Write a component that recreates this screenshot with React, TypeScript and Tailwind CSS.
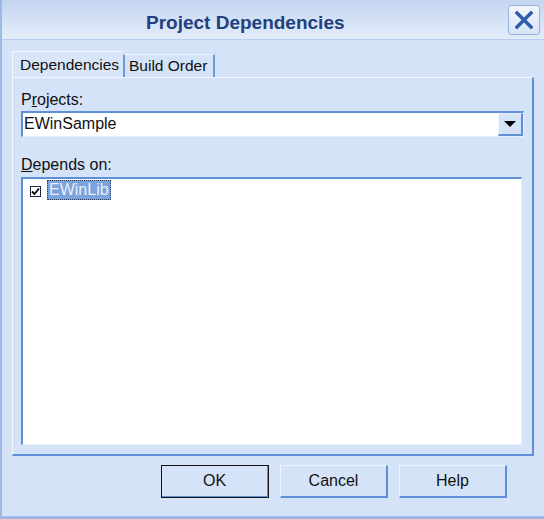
import { useState } from 'react';

const font = { fontFamily: '"Liberation Sans", Arial, sans-serif' };

function CloseButton() {
  return (
    <button className="mt-[5px] mr-[4px] flex h-[30px] w-[32px] items-center justify-center rounded-[3px] border border-[#97b2dd] bg-gradient-to-b from-[#f2f6fd] to-[#d6e3f7]">
      <svg width="20" height="20" viewBox="0 0 20 20">
        <path d="M3 3 L17 17 M17 3 L3 17" stroke="#2f5ca8" strokeWidth="3.4" strokeLinecap="square" />
      </svg>
    </button>
  );
}

function DialogButton({ label, focused }: { label: string; focused?: boolean }) {
  return (
    <button
      className={
        'h-[33px] w-[108px] border-t border-l border-b-2 border-r-2 border-t-[#eef4fd] border-l-[#eef4fd] border-b-[#5f8fd6] border-r-[#5f8fd6] bg-[#d4e3f8] text-[16px] text-[#111] ' +
        (focused ? 'outline outline-1 outline-[#111] -outline-offset-1' : '')
      }
    >
      {label}
    </button>
  );
}

export default function App() {
  const [checked, setChecked] = useState(true);

  return (
    <div style={font} className="flex h-[519px] w-[544px] flex-col overflow-hidden border-l-2 border-b-[3px] border-[#9db9e6] bg-[#d4e3f8]">
      <div className="flex h-[40px] shrink-0 items-start border-b border-[#b9cff0] bg-gradient-to-b from-[#c4d5f0] to-[#e3ecfa]">
        <div className="flex-1 pl-[144px] pt-[9px] text-[19px] font-bold text-[#22407c]">Project Dependencies</div>
        <CloseButton />
      </div>

      <div className="flex flex-col px-[10px] pt-[10px]">
        <div className="flex h-[27px] items-end">
          <div className="flex h-[26px] w-[111px] items-center border-l border-t border-[#f3f7fd] bg-[#d9e6f9] pl-[7px] text-[15.5px] text-[#111]">
            Dependencies
          </div>
          <div className="flex h-[23px] w-[92px] items-center border-l-2 border-r-2 border-t border-l-[#6f9ad9] border-r-[#6f9ad9] border-t-[#eef4fd] pl-[4px] text-[15.5px] text-[#111]">
            Build Order
          </div>
        </div>

        <div className="flex h-[379px] flex-col border-l border-t border-b-2 border-r-2 border-l-[#f3f7fd] border-t-[#f3f7fd] border-b-[#5f8fd6] border-r-[#5f8fd6] pl-[8px] pr-[8px] pt-[12px]">
          <div className="text-[16px] leading-[20px] text-[#111]">
            P<span className="underline">r</span>ojects:
          </div>
          <div className="mt-[1px] flex h-[26px] border-l-2 border-t-2 border-b border-r border-l-[#5f8fd6] border-t-[#5f8fd6] border-b-[#e8eefa] border-r-[#e8eefa] bg-white">
            <div className="flex-1 pl-[1px] text-[16px] leading-[22px] text-[#111]">EWinSample</div>
            <div className="flex w-[25px] items-center justify-center border-l border-t border-b-2 border-r-2 border-l-[#eef4fd] border-t-[#eef4fd] border-b-[#5f8fd6] border-r-[#5f8fd6] bg-[#d4e3f8]">
              <svg width="12" height="7" viewBox="0 0 12 7">
                <path d="M0 0 H12 L6 6 Z" fill="#000" />
              </svg>
            </div>
          </div>

          <div className="mt-[18px] text-[16px] leading-[20px] text-[#111]">
            <span className="underline">D</span>epends on:
          </div>
          <div className="mt-[2px] mr-[2px] h-[268px] border-l-2 border-t-2 border-b border-r border-l-[#5f8fd6] border-t-[#5f8fd6] border-b-[#e8eefa] border-r-[#e8eefa] bg-white pl-[7px] pt-[1px]">
            <div className="flex items-center gap-[6px]">
              <button
                onClick={() => setChecked(!checked)}
                className="mt-[2px] flex h-[11px] w-[11px] items-center justify-center border border-[#1c2a48] bg-white"
              >
                {checked && (
                  <svg width="9" height="9" viewBox="0 0 9 9">
                    <path d="M1 4.5 L3.5 7 L8 1.5" stroke="#000" strokeWidth="1.8" fill="none" />
                  </svg>
                )}
              </button>
              <span className="border border-dotted border-[#2d3e5c] bg-[#7ba3dc] px-[1px] text-[16px] leading-[18px] text-[#e8effb]">
                EWinLib
              </span>
            </div>
          </div>
        </div>
      </div>

      <div className="flex justify-end gap-[11px] pr-[37px] pt-[9px]">
        <DialogButton label="OK" focused />
        <DialogButton label="Cancel" />
        <DialogButton label="Help" />
      </div>
    </div>
  );
}
